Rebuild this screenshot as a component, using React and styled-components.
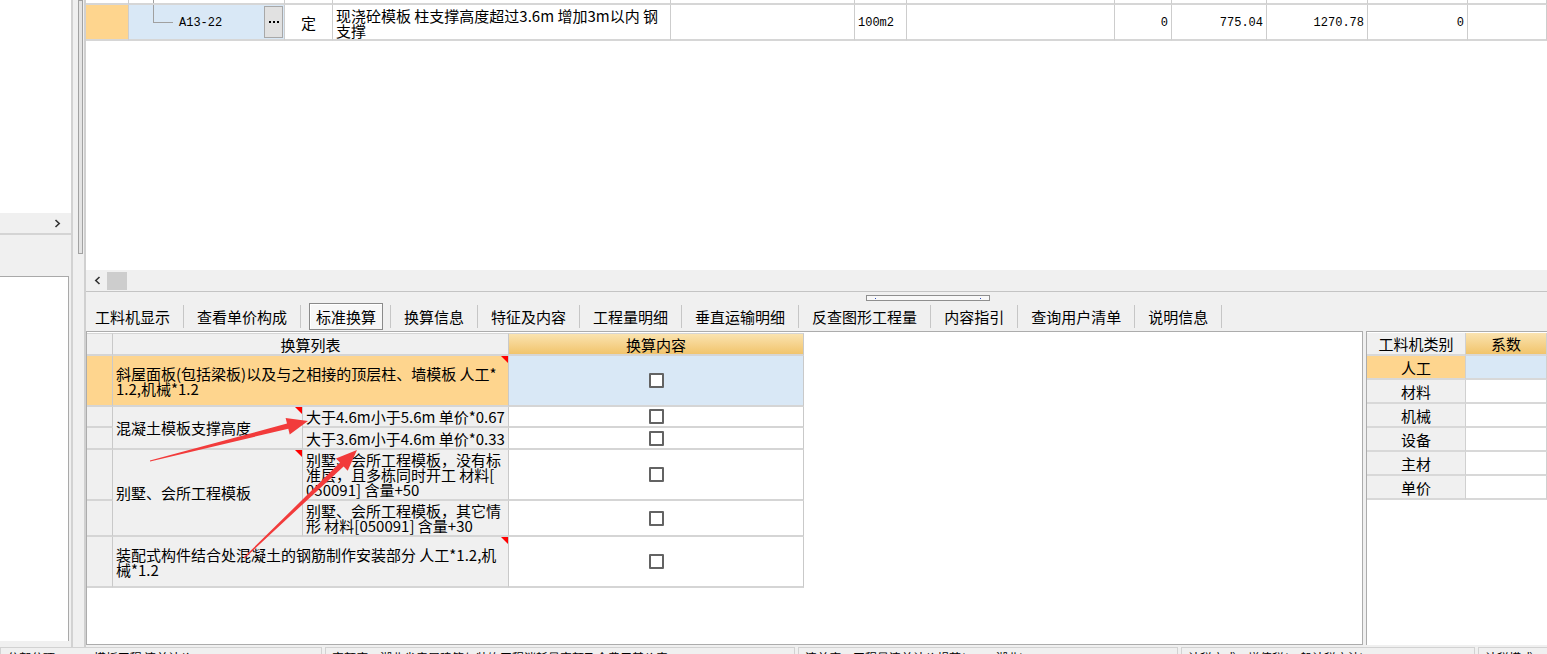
import React from "react";
import styled, { createGlobalStyle, css } from "styled-components";

const GlobalStyle = createGlobalStyle`
  html, body {
    margin: 0;
    padding: 0;
    overflow: hidden;
    background: #f0f0f0;
  }
  body {
    font-family: "Noto Sans CJK SC", "Liberation Sans", sans-serif;
    color: #000;
  }
  * {
    box-sizing: border-box;
  }
`;

const tones = {
  white: "#ffffff",
  gray: "#f0f0f0",
  orange: "#fed58e",
  blue: "#d9e8f6",
  head: "linear-gradient(#fae3b0, #f1c46c)",
};

const topCols =
  "43px 156px 48px 338px 184px 52px 208px 57px 95px 101px 100px 1fr";

const tabs = [
  "工料机显示",
  "查看单价构成",
  "标准换算",
  "换算信息",
  "特征及内容",
  "工程量明细",
  "垂直运输明细",
  "反查图形工程量",
  "内容指引",
  "查询用户清单",
  "说明信息",
];

const convRows = [
  { area: "1 / 1 / 2 / 2", tone: "gray" },
  { area: "1 / 2 / 2 / 4", tone: "gray", center: true, lines: ["换算列表"] },
  { area: "1 / 4 / 2 / 5", tone: "head", center: true, lines: ["换算内容"] },
  { area: "2 / 1 / 3 / 2", tone: "orange" },
  {
    area: "2 / 2 / 3 / 4",
    tone: "orange",
    flag: true,
    lines: ["斜屋面板(包括梁板)以及与之相接的顶层柱、墙模板 人工*", "1.2,机械*1.2"],
  },
  { area: "2 / 4 / 3 / 5", tone: "blue", center: true, check: true },
  { area: "3 / 1 / 4 / 2", tone: "gray" },
  { area: "4 / 1 / 5 / 2", tone: "gray" },
  { area: "3 / 2 / 5 / 3", tone: "gray", flag: true, lines: ["混凝土模板支撑高度"] },
  { area: "3 / 3 / 4 / 4", tone: "gray", lines: ["大于4.6m小于5.6m 单价*0.67"] },
  { area: "4 / 3 / 5 / 4", tone: "gray", lines: ["大于3.6m小于4.6m 单价*0.33"] },
  { area: "3 / 4 / 4 / 5", tone: "white", center: true, check: true },
  { area: "4 / 4 / 5 / 5", tone: "white", center: true, check: true },
  { area: "5 / 1 / 6 / 2", tone: "gray" },
  { area: "6 / 1 / 7 / 2", tone: "gray" },
  { area: "5 / 2 / 7 / 3", tone: "gray", flag: true, lines: ["别墅、会所工程模板"] },
  {
    area: "5 / 3 / 6 / 4",
    tone: "gray",
    lines: ["别墅、会所工程模板，没有标", "准层，且多栋同时开工 材料[", "050091] 含量+50"],
  },
  {
    area: "6 / 3 / 7 / 4",
    tone: "gray",
    lines: ["别墅、会所工程模板，其它情", "形 材料[050091] 含量+30"],
  },
  { area: "5 / 4 / 6 / 5", tone: "white", center: true, check: true },
  { area: "6 / 4 / 7 / 5", tone: "white", center: true, check: true },
  { area: "7 / 1 / 8 / 2", tone: "gray" },
  {
    area: "7 / 2 / 8 / 4",
    tone: "gray",
    flag: true,
    lines: ["装配式构件结合处混凝土的钢筋制作安装部分 人工*1.2,机", "械*1.2"],
  },
  { area: "7 / 4 / 8 / 5", tone: "white", center: true, check: true },
];

const kinds = ["人工", "材料", "机械", "设备", "主材", "单价"];

const statusItems = [
  { w: 322, text: "分部分项：A.13 模板工程  清单计价" },
  { w: 470, text: "定额库：湖北省房屋建筑与装饰工程消耗量定额及全费用基价表" },
  { w: 380, text: "清单库：工程量清单计价规范(2013-湖北)" },
  { w: 294, text: "计税方式：增值税(一般计税方法)" },
  { w: 70, text: "计税模式" },
];

const arrows = [
  { from: [150, 461], to: [308, 421] },
  { from: [244, 558], to: [357, 450] },
];

function arrowPoints(from, to) {
  const [x1, y1] = from;
  const [x2, y2] = to;
  const dx = x2 - x1;
  const dy = y2 - y1;
  const len = Math.hypot(dx, dy);
  const ux = dx / len;
  const uy = dy / len;
  const nx = -uy;
  const ny = ux;
  const head = 21;
  const hw = 8.5;
  const sw = 2.6;
  const tw = 0.6;
  const bx = x2 - ux * head;
  const by = y2 - uy * head;
  const p = (x, y) => `${x.toFixed(1)},${y.toFixed(1)}`;
  return [
    p(x1 + nx * tw, y1 + ny * tw),
    p(bx + nx * sw, by + ny * sw),
    p(bx + nx * hw, by + ny * hw),
    p(x2, y2),
    p(bx - nx * hw, by - ny * hw),
    p(bx - nx * sw, by - ny * sw),
    p(x1 - nx * tw, y1 - ny * tw),
  ].join(" ");
}

const Chevron = ({ dir }) => (
  <svg width="7" height="9" viewBox="0 0 7 9">
    <path
      d={dir === "left" ? "M5.5 1 L1.8 4.5 L5.5 8" : "M1.5 1 L5.2 4.5 L1.5 8"}
      fill="none"
      stroke="#333"
      strokeWidth="1.6"
    />
  </svg>
);

export default function App() {
  return (
    <Window>
      <GlobalStyle />
      <Main>
        <LeftPane>
          <LeftBlank />
          <LeftNav>
            <Chevron dir="right" />
          </LeftNav>
          <LeftGap />
          <LeftList />
        </LeftPane>

        <Splitter>
          <SplitHandle />
        </Splitter>

        <Workspace>
          <TopGrid>
            <TopRow $h={5}>
              <TopCell />
              <TopCell>
                <TreeStem />
              </TopCell>
              <TopCell />
              <TopCell />
              <TopCell />
              <TopCell />
              <TopCell />
              <TopCell />
              <TopCell />
              <TopCell />
              <TopCell />
              <TopCell />
            </TopRow>
            <TopRow $h={36}>
              <TopCell $bg={tones.orange} />
              <TopCell $bg={tones.blue}>
                <TreeElbow />
                <Mono $indent={47}>A13-22</Mono>
                <DotsButton>
                  <Dot />
                  <Dot />
                  <Dot />
                </DotsButton>
              </TopCell>
              <TopCell $justify="center">定</TopCell>
              <TopCell $top>
                <Lines>
                  <Line>现浇砼模板 柱支撑高度超过3.6m 增加3m以内 钢</Line>
                  <Line>支撑</Line>
                </Lines>
              </TopCell>
              <TopCell />
              <TopCell>
                <Mono>100m2</Mono>
              </TopCell>
              <TopCell />
              <TopCell $justify="flex-end">
                <Mono>0</Mono>
              </TopCell>
              <TopCell $justify="flex-end">
                <Mono>775.04</Mono>
              </TopCell>
              <TopCell $justify="flex-end">
                <Mono>1270.78</Mono>
              </TopCell>
              <TopCell $justify="flex-end">
                <Mono>0</Mono>
              </TopCell>
              <TopCell />
            </TopRow>
          </TopGrid>

          <HScroll>
            <Chevron dir="left" />
            <Thumb />
          </HScroll>

          <GripBar>
            <Grip>
              <GripDot />
              <GripDot />
            </Grip>
          </GripBar>

          <TabStrip>
            {tabs.map((t) =>
              t === "标准换算" ? (
                <Tab key={t} $active>
                  <ActiveBox>{t}</ActiveBox>
                </Tab>
              ) : (
                <Tab key={t}>{t}</Tab>
              )
            )}
          </TabStrip>

          <Panels>
            <ConvPanel>
              <ConvGrid>
                {convRows.map((c) => (
                  <GCell
                    key={c.area}
                    $area={c.area}
                    $tone={c.tone}
                    $center={c.center}
                    $flag={c.flag}
                    $head={c.area.startsWith("1 /")}
                  >
                    {c.check && <CheckBox />}
                    {c.lines && (
                      <Lines>
                        {c.lines.map((l) => (
                          <Line key={l}>{l}</Line>
                        ))}
                      </Lines>
                    )}
                  </GCell>
                ))}
              </ConvGrid>
            </ConvPanel>

            <KindPanel>
              <KindGrid>
                <KCell $tone="gray">工料机类别</KCell>
                <KCell $tone="head">系数</KCell>
                {kinds.map((k, i) => (
                  <React.Fragment key={k}>
                    <KCell $tone={i === 0 ? "orange" : "gray"}>{k}</KCell>
                    <KCell $tone={i === 0 ? "blue" : "white"} />
                  </React.Fragment>
                ))}
              </KindGrid>
            </KindPanel>
          </Panels>
        </Workspace>
      </Main>

      <StatusBar>
        {statusItems.map((s) => (
          <StatusItem key={s.text} $w={s.w}>
            {s.text}
          </StatusItem>
        ))}
      </StatusBar>

      <ArrowLayer viewBox="0 0 1547 654">
        {arrows.map((a, i) => (
          <polygon key={i} points={arrowPoints(a.from, a.to)} fill="#f23b3b" />
        ))}
      </ArrowLayer>
    </Window>
  );
}

const Window = styled.div`
  position: relative;
  width: 1547px;
  height: 654px;
  display: flex;
  flex-direction: column;
  overflow: hidden;
  background: #f0f0f0;
`;

const Main = styled.div`
  display: flex;
  height: 647px;
  flex: none;
`;

const LeftPane = styled.div`
  width: 73px;
  display: flex;
  flex-direction: column;
  border-right: 2px solid #d2d2d2;
  background: #f0f0f0;
`;

const LeftBlank = styled.div`
  height: 213px;
  background: #fff;
`;

const LeftNav = styled.div`
  height: 22px;
  display: flex;
  align-items: center;
  justify-content: flex-end;
  padding-right: 10px;
  background: #f0f0f0;
  border-bottom: 2px solid #d4d4d4;
`;

const LeftGap = styled.div`
  height: 41px;
`;

const LeftList = styled.div`
  flex: 1;
  margin: 0 2px 6px 0;
  background: #fff;
  border-top: 1px solid #a9a9a9;
  border-right: 1px solid #a9a9a9;
`;

const Splitter = styled.div`
  width: 11px;
  padding-left: 5px;
  background: #f0f0f0;
`;

const SplitHandle = styled.div`
  width: 5px;
  height: 254px;
  border: 1px solid #a2a2a2;
  background: #e4e4e4;
`;

const Workspace = styled.div`
  flex: 1;
  min-width: 0;
  display: flex;
  flex-direction: column;
  border-left: 2px solid #d0d0d0;
`;

const TopGrid = styled.div`
  height: 270px;
  background: #fff;
`;

const TopRow = styled.div`
  display: grid;
  grid-template-columns: ${topCols};
  height: ${(p) => p.$h}px;
`;

const TopCell = styled.div`
  position: relative;
  display: flex;
  align-items: ${(p) => (p.$top ? "flex-start" : "center")};
  justify-content: ${(p) => p.$justify || "flex-start"};
  padding: ${(p) => (p.$top ? "3px 3px 0" : "0 3px")};
  background: ${(p) => p.$bg || "#fff"};
  border-right: 1px solid #cdcdcd;
  border-bottom: 2px solid #d6d6d6;
  font-size: 15px;
  line-height: 15px;
  white-space: nowrap;
  overflow: hidden;
`;

const TreeStem = styled.span`
  position: absolute;
  left: 24px;
  top: 0;
  bottom: -2px;
  border-left: 1px solid #a0a0a0;
`;

const TreeElbow = styled.span`
  position: absolute;
  left: 24px;
  top: 0;
  width: 20px;
  height: 18px;
  border-left: 1px solid #a0a0a0;
  border-bottom: 1px solid #a0a0a0;
`;

const Mono = styled.span`
  font-family: "Liberation Mono", monospace;
  font-size: 12px;
  margin-left: ${(p) => p.$indent || 0}px;
  margin-top: 2px;
`;

const DotsButton = styled.span`
  margin-left: auto;
  margin-right: -2px;
  width: 19px;
  height: 32px;
  display: flex;
  align-items: center;
  justify-content: center;
  gap: 2px;
  background: #e1e1e1;
  border: 1px solid #a8a8a8;
`;

const Dot = styled.span`
  width: 2px;
  height: 2px;
  background: #000;
`;

const Lines = styled.div`
  display: flex;
  flex-direction: column;
`;

const Line = styled.span`
  display: block;
  white-space: nowrap;
  line-height: 15px;
`;

const HScroll = styled.div`
  height: 21px;
  display: flex;
  align-items: center;
  gap: 6px;
  padding-left: 8px;
  background: #f0f0f0;
`;

const Thumb = styled.div`
  width: 20px;
  height: 18px;
  background: #cdcdcd;
`;

const GripBar = styled.div`
  height: 11px;
  padding: 3px 0 0 780px;
  border-top: 1px solid #c4c4c4;
  background: #f0f0f0;
`;

const Grip = styled.div`
  width: 124px;
  height: 6px;
  display: flex;
  align-items: center;
  justify-content: space-between;
  padding: 0 8px;
  border: 1px solid #8e8e8e;
  background: #f8f8f8;
`;

const GripDot = styled.span`
  width: 1px;
  height: 1px;
  background: #3050c0;
`;

const TabStrip = styled.div`
  height: 29px;
  display: flex;
  align-items: center;
  background: #f0f0f0;
`;

const Tab = styled.div`
  height: 23px;
  display: flex;
  align-items: center;
  padding: ${(p) => (p.$active ? "0 7px 0 8px" : "0 13px")};
  border-right: 1px solid #c6c6c6;
  font-size: 15px;
  line-height: 15px;
  white-space: nowrap;
  &:first-child {
    padding-left: 9px;
  }
`;

const ActiveBox = styled.span`
  height: 27px;
  display: flex;
  align-items: center;
  padding: 0 6px;
  background: #f7f7f7;
  border: 1px solid #8a8a8a;
  box-shadow: inset 1px 1px 0 #fff;
`;

const Panels = styled.div`
  flex: 1;
  display: flex;
  gap: 3px;
  padding-bottom: 2px;
`;

const ConvPanel = styled.div`
  flex: 1;
  padding-top: 1px;
  background: #fff;
  border: 1px solid #acacac;
`;

const ConvGrid = styled.div`
  display: grid;
  grid-template-columns: 26px 190px 206px 295px;
  grid-template-rows: 23px 51px 21px 22px 51px 36px 51px;
  width: 717px;
`;

const GCell = styled.div`
  grid-area: ${(p) => p.$area};
  position: relative;
  display: flex;
  align-items: center;
  justify-content: ${(p) => (p.$center ? "center" : "flex-start")};
  padding: 0 3px;
  background: ${(p) => tones[p.$tone]};
  border-right: 1px solid #c9c9c9;
  border-bottom: 2px solid #d5d5d5;
  font-size: 15px;
  line-height: 15px;
  ${(p) =>
    p.$head &&
    css`
      border-top: 1px solid #d5d5d5;
    `}
  ${(p) =>
    p.$flag &&
    css`
      &::after {
        content: "";
        position: absolute;
        top: 0;
        right: 0;
        border-top: 7px solid #ff0000;
        border-left: 7px solid transparent;
      }
    `}
`;

const CheckBox = styled.span`
  width: 15px;
  height: 15px;
  border: 2px solid #636363;
  border-radius: 1px;
  background: #fff;
`;

const KindPanel = styled.div`
  width: 181px;
  padding-top: 1px;
  background: #fff;
  border-top: 1px solid #acacac;
  border-left: 1px solid #acacac;
`;

const KindGrid = styled.div`
  display: grid;
  grid-template-columns: 99px 1fr;
  grid-template-rows: 23px repeat(6, 24px);
`;

const KCell = styled.div`
  display: flex;
  align-items: center;
  justify-content: center;
  background: ${(p) => tones[p.$tone]};
  border-right: 1px solid #d0d0d0;
  border-bottom: 2px solid #d8d8d8;
  font-size: 15px;
  line-height: 15px;
`;

const StatusBar = styled.div`
  height: 22px;
  flex: none;
  display: flex;
  gap: 3px;
  background: #f0f0f0;
`;

const StatusItem = styled.div`
  width: ${(p) => p.$w}px;
  flex: none;
  padding: 3px 6px 0;
  border: 1px solid #d2d2d2;
  font-size: 12px;
  line-height: 14px;
  white-space: nowrap;
  overflow: hidden;
`;

const ArrowLayer = styled.svg`
  position: absolute;
  left: 0;
  top: 0;
  width: 1547px;
  height: 654px;
  pointer-events: none;
`;
